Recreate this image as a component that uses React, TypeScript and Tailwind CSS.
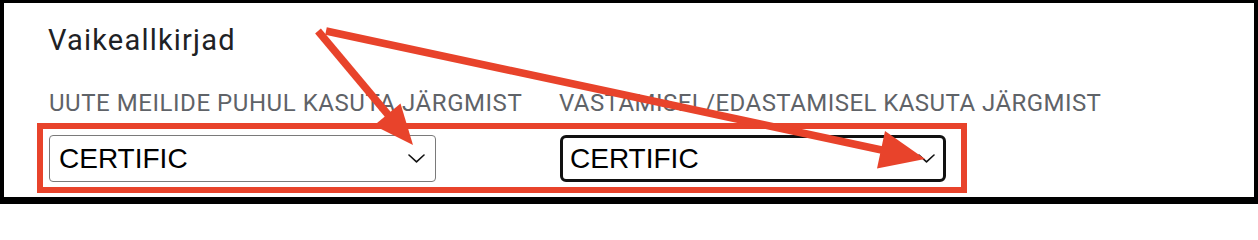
import React from "react";

function Chevron() {
  return (
    <svg width="17" height="9" viewBox="0 0 17 9" className="shrink-0">
      <polyline points="1,1 8.5,7.8 16,1" fill="none" stroke="#111" strokeWidth="1.6" strokeLinecap="round" strokeLinejoin="round" />
    </svg>
  );
}

export default function App() {
  const red = "#e8432b";
  return (
    <div className="relative w-[1258px] h-[204px] bg-black pt-[3px] pl-[4px] pr-[4px] pb-[7px]">
      <div className="w-full h-full bg-white pl-[44px] pt-[20px]">
        <h2 className="font-['Roboto','Noto_Sans',sans-serif] text-[29px] leading-[34px] tracking-[1.2px] text-[#202124] font-normal">
          Vaikeallkirjad
        </h2>
        <div className="mt-[33px] flex">
          <div className="w-[511px] flex flex-col">
            <div className="ml-[1px] font-['Roboto','Noto_Sans',sans-serif] text-[24px] leading-[27px] tracking-[0.55px] text-[#5f6368] whitespace-nowrap">
              UUTE MEILIDE PUHUL KASUTA JÄRGMIST
            </div>
            <div className="mt-[18px] ml-[1px] w-[387px] h-[47px] border border-[#7a7a7a] rounded-[4px] pl-[9px] pr-[10px] flex items-center justify-between">
              <span className="font-['Liberation_Sans',Arial,sans-serif] text-[28px] text-black leading-none">CERTIFIC</span>
              <Chevron />
            </div>
          </div>
          <div className="flex flex-col">
            <div className="font-['Roboto','Noto_Sans',sans-serif] text-[24px] leading-[27px] tracking-[0.45px] text-[#5f6368] whitespace-nowrap">
              VASTAMISEL/EDASTAMISEL KASUTA JÄRGMIST
            </div>
            <div className="mt-[18px] ml-[1px] w-[386px] h-[47px] border-[3px] border-[#111] rounded-[6px] pl-[7px] pr-[8px] flex items-center justify-between">
              <span className="font-['Liberation_Sans',Arial,sans-serif] text-[28px] text-black leading-none">CERTIFIC</span>
              <Chevron />
            </div>
          </div>
        </div>
      </div>
      <svg
        className="absolute left-0 top-0 pointer-events-none"
        width="1258"
        height="204"
        viewBox="0 0 1258 204"
      >
        <rect x="40" y="126" width="924" height="64" fill="none" stroke={red} strokeWidth="6" />
        <line x1="318" y1="31" x2="390" y2="117" stroke={red} strokeWidth="7.5" />
        <polygon points="413,145 374,125.5 400.5,103.5" fill={red} />
        <line x1="326" y1="31" x2="884" y2="150.5" stroke={red} strokeWidth="7.5" />
        <polygon points="925,159 877,168.5 885,131" fill={red} />
      </svg>
    </div>
  );
}
